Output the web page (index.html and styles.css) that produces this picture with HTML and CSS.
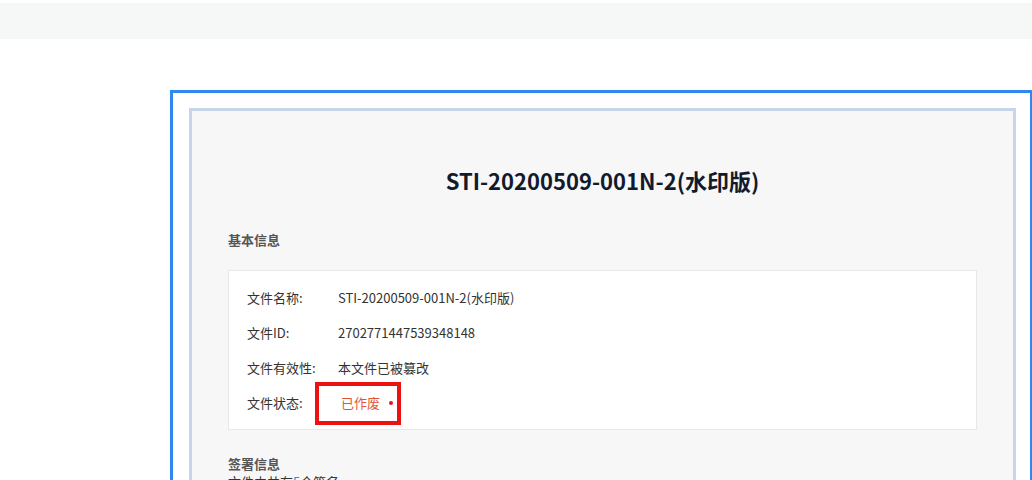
FILE: index.html
```html
<!DOCTYPE html>
<html lang="zh-CN">
<head>
    <meta charset="UTF-8">
    <meta name="viewport" content="width=device-width, initial-scale=1.0">
    <title>文件验证</title>
    <link rel="stylesheet" href="styles.css">
</head>
<body>
    <div class="top-bar"></div>
    <div class="page">
        <div class="frame">
            <div class="sheet">
                <h1 class="doc-title">STI-20200509-001N-2(水印版)</h1>

                <h3 class="section-title">基本信息</h3>
                <div class="info-card">
                    <div class="info-row">
                        <span class="info-label">文件名称:</span>
                        <span class="info-value">STI-20200509-001N-2(水印版)</span>
                    </div>
                    <div class="info-row">
                        <span class="info-label">文件ID:</span>
                        <span class="info-value">2702771447539348148</span>
                    </div>
                    <div class="info-row">
                        <span class="info-label">文件有效性:</span>
                        <span class="info-value">本文件已被篡改</span>
                    </div>
                    <div class="info-row">
                        <span class="info-label">文件状态:</span>
                        <span class="info-value status">
                            已作废<i class="status-dot"></i>
                            <span class="highlight"></span>
                        </span>
                    </div>
                </div>

                <h3 class="section-title sign-title">签署信息</h3>
                <p class="sign-count">文件中共有<span class="num">5</span>个签名</p>
            </div>
        </div>
    </div>
</body>
</html>
```

FILE: styles.css
```css
:root {
    --bar: #f6f7f7;
    --frame: #2f88ee;
    --sheet-border: #c6d5ea;
    --sheet: #f8f7f8;
    --title: #121b2c;
    --text: #333333;
    --muted: #555555;
    --border: #e8e8e8;
    --red: #ee1111;
    --void: #e0553a;
    --link: #2f88ee;
}
body {
    margin: 0;
    background: #ffffff;
    font-family: "Noto Sans CJK SC", "Noto Sans", sans-serif;
    color: var(--text);
    overflow: hidden;
}
.top-bar {
    margin-top: 3px;
    height: 36px;
    background: var(--bar);
}
.page {
    padding: 51px 0 0 170px;
}
.frame {
    border: 3px solid var(--frame);
    border-right-width: 2px;
    border-bottom: none;
    padding: 15px 14px 0 16px;
}
.sheet {
    border: 3px solid var(--sheet-border);
    border-bottom: none;
    background: var(--sheet);
    padding: 53px 36px 0;
    height: 400px;
}
.doc-title {
    margin: 0;
    text-align: center;
    font-size: 22px;
    line-height: 32px;
    font-weight: 700;
    color: var(--title);
}
.section-title {
    margin: 34px 0 0;
    font-size: 13px;
    line-height: 20px;
    font-weight: 700;
    color: var(--muted);
}
.info-card {
    margin-top: 20px;
    background: #ffffff;
    border: 1px solid var(--border);
    padding: 9px 18px;
}
.info-row {
    display: flex;
    font-size: 13px;
    line-height: 35px;
}
.info-label {
    width: 91px;
    flex-shrink: 0;
}
.status {
    position: relative;
    display: flex;
    align-items: center;
    padding-left: 3px;
    color: var(--void);
}
.status-dot {
    width: 4px;
    height: 4px;
    border-radius: 50%;
    background: var(--red);
    margin-left: 9px;
}
.highlight {
    position: absolute;
    left: -23px;
    top: -3px;
    width: 78px;
    height: 35px;
    border: 4px solid var(--red);
}
.sign-title {
    margin-top: 25px;
    line-height: 18px;
}
.sign-count {
    margin: 0;
    font-size: 13px;
    line-height: 18px;
    color: var(--text);
}
.num {
    color: var(--link);
}
```
